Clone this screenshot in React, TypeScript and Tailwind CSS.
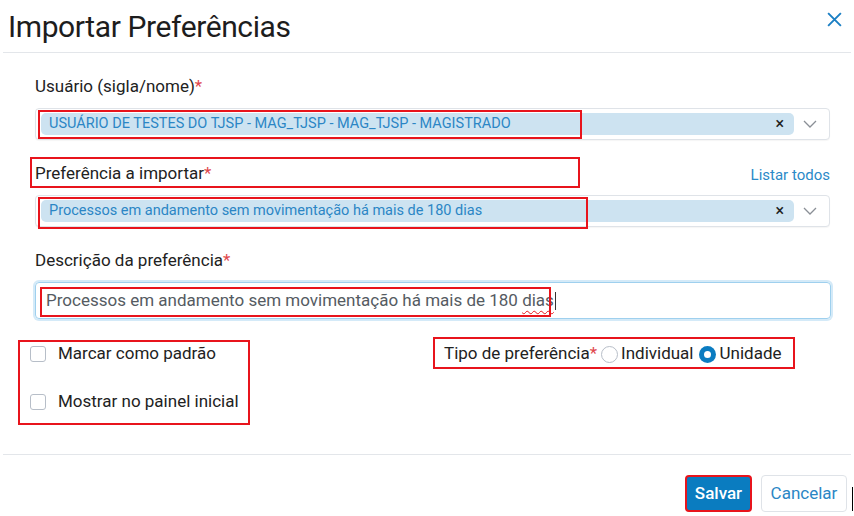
import React from "react";

const Req = () => <span className="text-[#e0474c]">*</span>;

const Chevron = () => (
  <svg width="14" height="8" viewBox="0 0 14 8" fill="none" className="text-[#8a8f96]">
    <path d="M1 1l6 6 6-6" stroke="currentColor" strokeWidth="1.3" />
  </svg>
);

const Tag = ({ text }: { text: string }) => (
  <div className="flex h-[32px] items-center rounded border border-[#dfe3e8] bg-white pl-[5px] pr-[12px] shadow-[0_1px_1px_rgba(0,0,0,0.04)]">
    <div className="flex h-[22px] flex-1 items-center justify-between rounded-[5px] bg-[#cde3f1] pl-[8px] pr-[10px]">
      <span className="text-[14.5px] text-[#2b86c5]">{text}</span>
      <span className="text-[16px] font-medium leading-none text-[#222]">×</span>
    </div>
    <div className="ml-[9px]">
      <Chevron />
    </div>
  </div>
);

const Check = ({ label }: { label: string }) => (
  <div className="flex h-[24px] items-center gap-[12px]">
    <div className="h-[16px] w-[16px] rounded-[3px] border border-[#b7bec8] bg-white" />
    <span className="text-[17px] text-[#222]">{label}</span>
  </div>
);

const RedBox = ({ c }: { c: string }) => (
  <div className={`pointer-events-none absolute border-2 border-[#e8141c] ${c}`} />
);

export default function App() {
  return (
    <div
      className="relative h-[516px] w-[854px] overflow-hidden bg-white text-[#222]"
      style={{ fontFamily: "Roboto, 'Liberation Sans', sans-serif" }}
    >
      <div className="mx-[3px] flex h-[53px] items-center justify-between border-b border-[#e3e6ea] pl-[5px] pr-[8px]">
        <h1 className="text-[30px] font-normal tracking-[-0.4px] text-[#1d1d1d]">Importar Preferências</h1>
        <svg width="17" height="17" viewBox="0 0 16 16" className="mb-[14px] text-[#1b7fc4]">
          <path d="M2 2l12 12M14 2L2 14" stroke="currentColor" strokeWidth="1.8" />
        </svg>
      </div>

      <div className="px-[35px] pt-[21px]">
        <div className="text-[17px] leading-[24px]">
          Usuário (sigla/nome)<Req />
        </div>
        <div className="mt-[10px] -mr-[11px]">
          <Tag text="USUÁRIO DE TESTES DO TJSP - MAG_TJSP - MAG_TJSP - MAGISTRADO" />
        </div>

        <div className="mt-[21px] -mr-[11px] flex items-end justify-between">
          <div className="text-[17px] leading-[24px]">
            Preferência a importar<Req />
          </div>
          <span className="text-[15px] leading-[20px] text-[#2b8ac8]">Listar todos</span>
        </div>
        <div className="mt-[10px] -mr-[11px]">
          <Tag text="Processos em andamento sem movimentação há mais de 180 dias" />
        </div>

        <div className="mt-[21px] text-[17px] leading-[24px]">
          Descrição da preferência<Req />
        </div>
        <div className="mt-[10px] -mr-[12px] flex h-[37px] items-center rounded border border-[#9fd0ee] px-[10px] shadow-[0_0_0_2px_rgba(160,208,240,0.45)]">
          <span className="text-[17px] text-[#555b62]">
            Processos em andamento sem movimentação há mais de 180{" "}
            <span className="underline decoration-[#e8141c] decoration-wavy decoration-[1px] underline-offset-[4px]">dias</span>
          </span>
          <span className="ml-[1px] h-[18px] w-[1px] bg-[#333]" />
        </div>

        <div className="mt-[23px] flex">
          <div className="-ml-[5px] flex w-[414px] flex-col gap-[24px]">
            <Check label="Marcar como padrão" />
            <Check label="Mostrar no painel inicial" />
          </div>
          <div className="flex h-[24px] items-center text-[17px]">
            <span>
              Tipo de preferência<Req />
            </span>
            <span className="ml-[4px] h-[17px] w-[17px] rounded-full border border-[#b7bec8] bg-white" />
            <span className="ml-[3px]">Individual</span>
            <span className="ml-[5px] flex h-[17px] w-[17px] items-center justify-center rounded-full bg-[#0b7cc1]">
              <span className="h-[7px] w-[7px] rounded-full bg-white" />
            </span>
            <span className="ml-[4px]">Unidade</span>
          </div>
        </div>
      </div>

      <div className="mx-[3px] mt-[40px] border-t border-[#e3e6ea]" />
      <div className="flex justify-end gap-[9px] pr-[7px] pt-[20px]">
        <button className="h-[37px] w-[67px] rounded border-2 border-[#e8141c] bg-[#0a7cc0] text-[17px] font-medium text-white">
          Salvar
        </button>
        <button className="h-[37px] w-[86px] rounded border border-[#dfe3e8] bg-white text-[17px] text-[#2b86c5]">
          Cancelar
        </button>
      </div>

      <RedBox c="left-[38px] top-[110px] h-[29px] w-[544px]" />
      <RedBox c="left-[30px] top-[157px] h-[31px] w-[550px]" />
      <RedBox c="left-[38px] top-[197px] h-[32px] w-[550px]" />
      <RedBox c="left-[40px] top-[287px] h-[30px] w-[511px]" />
      <RedBox c="left-[18px] top-[340px] h-[85px] w-[232px]" />
      <RedBox c="left-[433px] top-[337px] h-[32px] w-[362px]" />
      <div className="absolute left-[852px] top-[487px] h-[24px] w-[1px] bg-black" />
    </div>
  );
}
